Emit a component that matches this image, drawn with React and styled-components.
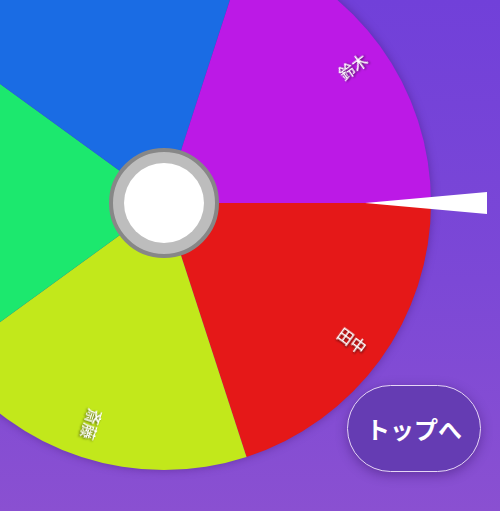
import React from 'react';
import styled, { createGlobalStyle } from 'styled-components';

const GlobalStyle = createGlobalStyle`
  html, body {
    margin: 0;
    padding: 0;
  }
  body {
    font-family: "Noto Sans CJK JP", "Noto Sans", sans-serif;
  }
`

const Page = styled.div`
  position: relative;
  width: 500px;
  height: 511px;
  overflow: hidden;
  background: linear-gradient(180deg, #7140d9 0%, #7c48d6 55%, #8a50d1 100%);
`

// wheel face and hub share one grid cell so the hub sits centred by flow
const WheelBox = styled.div`
  position: relative;
  display: grid;
  width: 534px;
  height: 534px;
  margin-left: -103px;
  margin-top: -64px;
  & > * {
    grid-area: 1 / 1;
  }
`

const WheelSvg = styled.svg`
  display: block;
  filter: drop-shadow(0 0 5px rgba(40, 0, 80, 0.35));
`

const Label = styled.text`
  fill: #fff;
  font-family: "Noto Sans CJK JP", sans-serif;
  font-size: 15.5px;
  font-weight: 500;
  filter: drop-shadow(1px 1px 1px rgba(0, 0, 0, 0.6));
`

const Hub = styled.div`
  position: relative;
  z-index: 1;
  place-self: center;
  width: 110px;
  height: 110px;
  box-sizing: border-box;
  border-radius: 50%;
  border: 4px solid #878787;
  background: #bdbdbd;
  display: flex;
  align-items: center;
  justify-content: center;
`

const HubCap = styled.div`
  width: 80px;
  height: 80px;
  border-radius: 50%;
  background: #fff;
`

const Pointer = styled.svg`
  position: absolute;
  z-index: 1;
  left: 468px;
  top: 255px;
  overflow: visible;
`

const TopButton = styled.button`
  position: absolute;
  z-index: 2;
  right: 19px;
  bottom: 39px;
  width: 134px;
  height: 87px;
  border-radius: 44px;
  border: 1.5px solid #e6d6f6;
  background: #653cb3;
  box-shadow: 0 3px 12px rgba(30, 0, 70, 0.35);
  color: #fff;
  font-family: "Noto Sans CJK JP", sans-serif;
  font-size: 24px;
  font-weight: 700;
  display: flex;
  align-items: center;
  justify-content: center;
  padding: 0;
`

const R = 267;

// only the three names that face the visible part of the wheel carry a label
const slices = [
  { color: '#e51818', from: 0, to: 72, name: '田中' },
  { color: '#c2e81b', from: 72, to: 144, name: '斎藤' },
  { color: '#1ce86e', from: 144, to: 216 },
  { color: '#1a6ce4', from: 216, to: 288 },
  { color: '#bc19e6', from: 288, to: 360, name: '鈴木' },
];

const pt = deg => {
  const a = (deg * Math.PI) / 180;
  return [R + R * Math.cos(a), R + R * Math.sin(a)];
};

const slicePath = (from, to) => {
  const [x0, y0] = pt(from);
  const [x1, y1] = pt(to);
  return `M ${R} ${R} L ${x0} ${y0} A ${R} ${R} 0 0 1 ${x1} ${y1} Z`;
};

const Wheel = () => (
  <WheelBox>
    <WheelSvg width={R * 2} height={R * 2} viewBox={`0 0 ${R * 2} ${R * 2}`}>
      {slices.map(s => (
        <path key={s.from} d={slicePath(s.from, s.to)} fill={s.color} />
      ))}
      {slices.filter(s => s.name).map(s => (
        <g key={s.name} transform={`translate(${R} ${R}) rotate(${(s.from + s.to) / 2})`}>
          <Label x={233} y={0} textAnchor="middle" dominantBaseline="central">
            {s.name}
          </Label>
        </g>
      ))}
    </WheelSvg>
    <Hub>
      <HubCap />
    </Hub>
    <Pointer width="122" height="24" viewBox="0 0 122 24">
      <polygon points="0,12 122,1 122,23" fill="#fff" />
    </Pointer>
  </WheelBox>
);

const App = () => {
  return (
    <Page>
      <GlobalStyle />
      <Wheel />
      <TopButton>トップへ</TopButton>
    </Page>
  );
};

export default App;
